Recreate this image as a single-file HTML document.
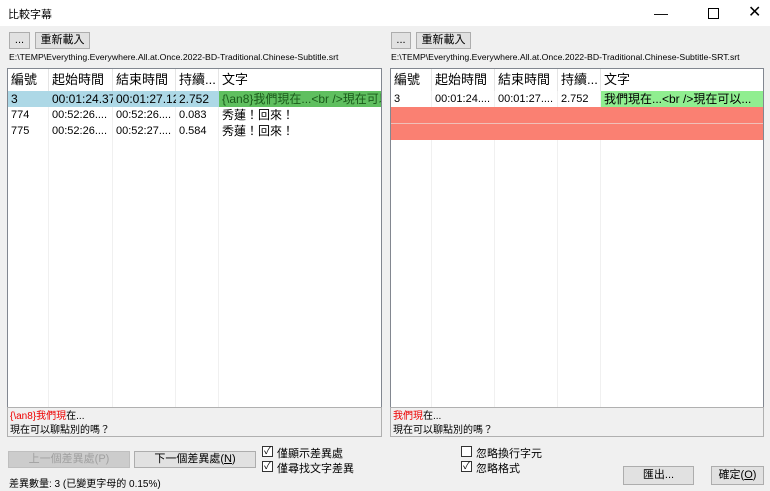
<html><head><style>
body{margin:0;width:770px;height:491px;background:#f0f0f0;font-family:"Liberation Sans","Noto Sans CJK TC",sans-serif;font-size:11px;position:relative;overflow:hidden;color:#000}
.a{position:absolute;white-space:nowrap}
.title{left:0;top:0;width:770px;height:26px;background:#fff}
.btn{position:absolute;background:#e1e1e1;border:1px solid #adadad;box-sizing:border-box;text-align:center;font-size:11px}
.list{position:absolute;background:#fff;border:1px solid #828790;box-sizing:border-box;overflow:hidden}
.row{position:absolute;left:0;right:0;height:16px;font-size:11px}
.c{position:absolute;top:0;height:100%;white-space:nowrap;overflow:hidden;padding-left:3px;box-sizing:border-box;line-height:16px}
.hd .c{font-size:13px;line-height:21px;border-right:1px solid #e5e5e5}
.vl{position:absolute;top:22px;bottom:0;width:1px;background:#f0f0f0}
.cb{position:absolute;width:11px;height:11px;border:1px solid #333;background:#fff;box-sizing:border-box;font-size:10px;line-height:9px;text-align:center}
.tb{position:absolute;background:#f0f0f0;border:1px solid #b0b0b0;box-sizing:border-box;font-size:10px;padding:2px 2px;line-height:14px}
</style></head><body>
<div class="a title"></div>
<div class="a" style="left:8px;top:6px;font-size:11px">比較字幕</div>
<div class="a" style="left:654px;top:5px;font-size:14px">&#8212;</div>
<div class="a" style="left:708px;top:4px;width:9px;height:9px;border:1px solid #000;top:8px"></div>
<div class="a" style="left:748px;top:2px;font-size:16px">✕</div>

<div class="btn" style="left:9px;top:32px;width:21px;height:17px;line-height:15px">...</div>
<div class="btn" style="left:35px;top:32px;width:55px;height:17px;line-height:15px">重新載入</div>
<div class="btn" style="left:391px;top:32px;width:20px;height:17px;line-height:15px">...</div>
<div class="btn" style="left:416px;top:32px;width:55px;height:17px;line-height:15px">重新載入</div>
<div class="a" style="left:9px;top:52px;font-size:8.7px">E:\TEMP\Everything.Everywhere.All.at.Once.2022-BD-Traditional.Chinese-Subtitle.srt</div>
<div class="a" style="left:391px;top:52px;font-size:8.7px">E:\TEMP\Everything.Everywhere.All.at.Once.2022-BD-Traditional.Chinese-Subtitle-SRT.srt</div>

<div class="list" style="left:7px;top:68px;width:375px;height:340px">
 <div class="vl" style="left:40px"></div><div class="vl" style="left:104px"></div><div class="vl" style="left:167px"></div><div class="vl" style="left:210px"></div>
 <div class="row hd" style="top:0;height:22px"><div class="c" style="left:0;width:41px">編號</div><div class="c" style="left:41px;width:64px">起始時間</div><div class="c" style="left:105px;width:63px">結束時間</div><div class="c" style="left:168px;width:43px">持續...</div><div class="c" style="left:211px;width:170px;border:0">文字</div></div>
 <div class="row" style="top:22px;background:#add8e6;font-size:12px"><div class="c" style="left:0;width:41px">3</div><div class="c" style="left:41px;width:64px">00:01:24.37</div><div class="c" style="left:105px;width:63px">00:01:27.12</div><div class="c" style="left:168px;width:43px">2.752</div><div class="c" style="left:211px;width:165px;background:#5fbf5f;color:#1a5a1a">{\an8}我們現在...&lt;br /&gt;現在可以</div></div>
 <div class="row" style="top:38px"><div class="c" style="left:0">774</div><div class="c" style="left:41px">00:52:26....</div><div class="c" style="left:105px">00:52:26....</div><div class="c" style="left:168px">0.083</div><div class="c" style="left:211px;font-size:12px">秀蓮！回來！</div></div>
 <div class="row" style="top:54px"><div class="c" style="left:0">775</div><div class="c" style="left:41px">00:52:26....</div><div class="c" style="left:105px">00:52:27....</div><div class="c" style="left:168px">0.584</div><div class="c" style="left:211px;font-size:12px">秀蓮！回來！</div></div>
</div>

<div class="list" style="left:390px;top:68px;width:374px;height:340px">
 <div class="vl" style="left:40px"></div><div class="vl" style="left:103px"></div><div class="vl" style="left:166px"></div><div class="vl" style="left:209px"></div>
 <div class="row hd" style="top:0;height:22px"><div class="c" style="left:0;width:41px">編號</div><div class="c" style="left:41px;width:63px">起始時間</div><div class="c" style="left:104px;width:63px">結束時間</div><div class="c" style="left:167px;width:43px">持續...</div><div class="c" style="left:210px;width:160px;border:0">文字</div></div>
 <div class="row" style="top:22px"><div class="c" style="left:0">3</div><div class="c" style="left:41px">00:01:24....</div><div class="c" style="left:104px">00:01:27....</div><div class="c" style="left:167px">2.752</div><div class="c" style="left:210px;width:163px;background:#90ee90;font-size:12px">我們現在...&lt;br /&gt;現在可以...</div></div>
 <div class="row" style="top:38px;background:#fa8072;border-bottom:1px solid #f0c0b8"></div>
 <div class="row" style="top:55px;background:#fa8072"></div>
</div>

<div class="tb" style="left:7px;top:407px;width:375px;height:30px"><span style="color:#e00">{\an8}我們現</span>在...<br>現在可以聊點別的嗎？</div>
<div class="tb" style="left:390px;top:407px;width:374px;height:30px"><span style="color:#e00">我們現</span>在...<br>現在可以聊點別的嗎？</div>

<div class="btn" style="left:8px;top:451px;width:122px;height:17px;line-height:15px;color:#a0a0a0;background:#ccc;border-color:#bfbfbf">上一個差異處(P)</div>
<div class="btn" style="left:134px;top:451px;width:122px;height:17px;line-height:15px">下一個差異處(<u>N</u>)</div>
<div class="cb" style="left:262px;top:446px">✓</div><div class="a" style="left:277px;top:445px">僅顯示差異處</div>
<div class="cb" style="left:262px;top:461px">✓</div><div class="a" style="left:277px;top:460px">僅尋找文字差異</div>
<div class="cb" style="left:461px;top:446px"></div><div class="a" style="left:476px;top:445px">忽略換行字元</div>
<div class="cb" style="left:461px;top:461px">✓</div><div class="a" style="left:476px;top:460px">忽略格式</div>
<div class="btn" style="left:623px;top:466px;width:71px;height:19px;line-height:17px">匯出...</div>
<div class="btn" style="left:711px;top:466px;width:53px;height:19px;line-height:17px">確定(<u>O</u>)</div>
<div class="a" style="left:9px;top:475px;font-size:10px">差異數量: 3 (已變更字母的 0.15%)</div>
</body></html>
